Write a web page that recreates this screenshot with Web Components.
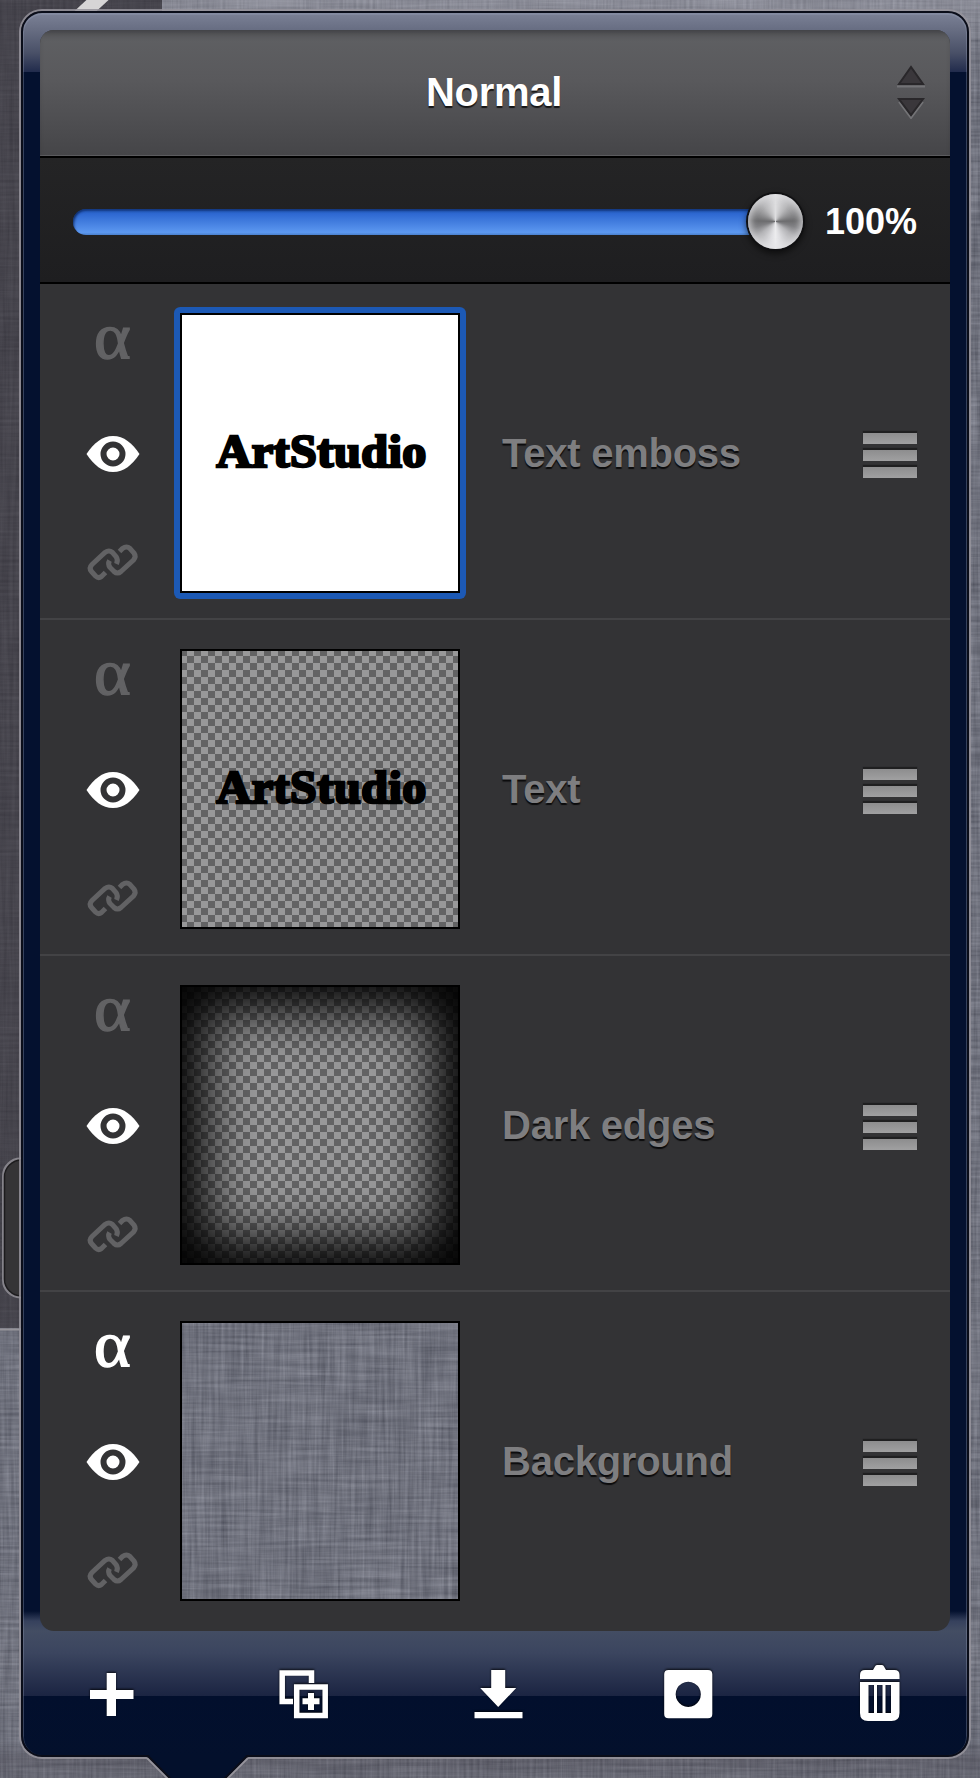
<!DOCTYPE html>
<html lang="en">
<head>
<meta charset="utf-8">
<title>Layers</title>
<style>
    html, body { margin: 0; height: 1778px; overflow: hidden; }

    body {
        position: relative;
        box-sizing: border-box;
        padding: 11px 11px 0 21px;
        background: #77757f;
        font-family: 'Liberation Sans', Arial, sans-serif;
        font-weight: bold;
    }
</style>
</head>
<body>
    <studio-canvas></studio-canvas>

    <layers-popover>
        <blend-mode slot="head">Normal</blend-mode>
        <opacity-slider slot="head">100%</opacity-slider>

        <layer-row selected>Text emboss<layer-thumb slot="thumb" kind="white">ArtStudio</layer-thumb></layer-row>
        <layer-row>Text<layer-thumb slot="thumb" kind="checker">ArtStudio</layer-thumb></layer-row>
        <layer-row>Dark edges<layer-thumb slot="thumb" kind="edges"></layer-thumb></layer-row>
        <layer-row alpha>Background<layer-thumb slot="thumb" kind="linen"></layer-thumb></layer-row>

        <layer-toolbar slot="foot"></layer-toolbar>
    </layers-popover>

<script>
const define = (name, html) => {
    const template = document.createElement('template')
    template.innerHTML = html

    window.customElements.define(name, class extends HTMLElement {
        constructor() {
            super()
            this.attachShadow({ mode: 'open' }).appendChild(template.content.cloneNode(true))
        }
    })
}

/* brushed cloth: two stretched noises, one along each axis */
define('linen-texture', `
    <style>
        :host { display: block; overflow: hidden; }
        svg { display: block; width: 100%; height: 100%; }
    </style>
    <svg>
        <filter id="h" x="0" y="0" width="100%" height="100%" color-interpolation-filters="sRGB">
            <feTurbulence type="fractalNoise" baseFrequency="0.013 0.3" numOctaves="3" seed="4"/>
            <feColorMatrix values="1 0 0 0 -.07  1 0 0 0 -.06  1 0 0 0 -.01  0 0 0 0 1"/>
        </filter>
        <filter id="v" x="0" y="0" width="100%" height="100%" color-interpolation-filters="sRGB">
            <feTurbulence type="fractalNoise" baseFrequency="0.3 0.013" numOctaves="3" seed="9"/>
            <feColorMatrix values="1 0 0 0 -.07  1 0 0 0 -.06  1 0 0 0 -.01  0 0 0 0 1"/>
        </filter>
        <rect width="100%" height="100%" fill="#72747f"/>
        <rect width="100%" height="100%" filter="url(#h)" opacity=".2"/>
        <rect width="100%" height="100%" filter="url(#v)" opacity=".17"/>
    </svg>
`)

define('studio-canvas', `
    <style>
        :host { position: absolute; inset: 0; overflow: hidden; }
        linen-texture, .shade, svg { position: absolute; inset: 0; }
        .shade {
            background:
                linear-gradient(rgba(42,38,44,.6), rgba(42,38,44,.6)) 0 0 / 162px 72px no-repeat,
                linear-gradient(rgba(42,38,44,.6), rgba(42,38,44,.6)) 0 72px / 40px 1256px no-repeat,
                linear-gradient(rgba(205,205,215,.3), rgba(205,205,215,.1)) 162px 0 / 818px 40px no-repeat,
                linear-gradient(transparent 1740px, rgba(60,56,66,.3) 1760px, rgba(60,56,66,.15));
        }
    </style>
    <linen-texture></linen-texture>
    <div class="shade"></div>
    <svg width="980" height="1778" fill="none">
        <path d="M0 1329.500H40" stroke="#96949a" stroke-width="2"/>
        <rect x="3.500" y="1159" width="60" height="138" rx="17" fill="#353436" stroke="#85838a" stroke-width="3"/>
        <rect x="4.500" y="1160" width="60" height="136" rx="17" stroke="#1c1b1d" stroke-width="1.500"/>
        <path d="M104-6 78 18" stroke="#d6d5d6" stroke-width="15"/>
    </svg>
`)

define('layers-popover', `
    <style>
        :host {
            display: block;
            position: relative;
            box-sizing: border-box;
            height: 1746px;
            padding: 17px 17px 0;
            border: 2px solid #0a0d19;
            border-radius: 21px;
            box-shadow: 0 0 0 2px rgba(150,148,156,.85), inset 0 1px 0 1px rgba(150,158,180,.35);
            background: linear-gradient(
                #7b8196 0, #676d82 17px, #495067 40px, #212b4c 59px,
                #04112f 59px, #04112f 1598px,
                #36415d 1608px, #434d63 1618px, #3b455f 1640px, #1b2442 1683px,
                #020f2d 1683px, #03102c);
        }
        .panel {
            display: flex;
            flex-direction: column;
            height: 1601px;
            border-radius: 14px;
            overflow: hidden;
            background: #333335;
        }
        .arrow { position: absolute; left: 121px; bottom: -23px; }
    </style>
    <div class="panel">
        <slot name="head"></slot>
        <slot></slot>
    </div>
    <slot name="foot"></slot>
    <svg class="arrow" width="110" height="25">
        <path d="M5 0H102V5L82 25H25L5 5Z" fill="#03102c"/>
        <path d="M3.500 3 26.500 26M103.500 3 80.500 26" stroke="#0a0d19" stroke-width="2.500"/>
        <path d="M3 5 24 26M104 5 83 26" stroke="#96949c" stroke-width="1.800"/>
    </svg>
`)

define('blend-mode', `
    <style>
        :host {
            display: grid;
            grid-template-columns: 60px 1fr 60px;
            align-items: center;
            box-sizing: border-box;
            height: 128px;
            padding: 0 10px;
            border-bottom: 2px solid #000;
            background: linear-gradient(#5f6063, #59595c 40%, #454548);
            box-shadow: inset 0 7px 7px -4px rgba(20,20,24,.45), inset 0 -1px 0 #5b5b5e;
            color: #fff;
            font-size: 40px;
            letter-spacing: -.3px;
            line-height: 46px;
            text-align: center;
            text-shadow: 0 2px 1px rgba(0,0,0,.75);
        }
        span { grid-column: 2; padding-right: 2px; padding-bottom: 2px; }
        svg { justify-self: end; margin-right: 14px; margin-bottom: 3px; }
    </style>
    <span><slot></slot></span>
    <svg width="30" height="54" stroke-width="2">
        <path d="M1 21.500H29M3 37 15 53 27 37" stroke="#737376" fill="none"/>
        <path d="M3 19 15 2 27 19Z" fill="#3a373b" stroke="#29272a"/>
        <path d="M3 34H27L15 50Z" fill="#3a373b" stroke="#29272a"/>
    </svg>
`)

define('opacity-slider', `
    <style>
        :host {
            display: flex;
            align-items: center;
            box-sizing: border-box;
            height: 126px;
            padding: 3px 0 0 33px;
            border-bottom: 2px solid #000;
            background: linear-gradient(#242425, #1e1e20);
            color: #fff;
            font-size: 36px;
        }
        .track {
            display: flex;
            justify-content: flex-end;
            align-items: center;
            width: 730px;
            height: 26px;
            border-radius: 13px;
            background: linear-gradient(#2258b8, #2f69d2 20%, #5c98f0 90%, #4a80cd) 0 0 / 715px 100% no-repeat;
            box-shadow: inset 8px 3px 3px -7px rgba(10,35,90,.7), inset 0 2px 2px rgba(10,35,90,.6);
        }
        .knob {
            width: 55px;
            height: 55px;
            border-radius: 50%;
            background: conic-gradient(#dedee0, #b9b9bb 35deg, #8e8e90 65deg, #6c6c6e 88deg, #7f7f82 105deg, #b4b4b7 130deg,
                #dedee1 165deg, #ececee 180deg, #dedee1 195deg, #b4b4b7 230deg, #7f7f82 255deg, #6c6c6e 272deg, #8e8e90 295deg, #b9b9bb 325deg, #dedee0);
            box-shadow: 0 0 0 2px #101012, 0 3px 6px 2px rgba(0,0,0,.55), inset 0 0 6px 3px rgba(225,225,228,.7);
        }
        .value { margin-left: 22px; line-height: 40px; padding-top: 1px; }
    </style>
    <div class="track"><div class="knob"></div></div>
    <div class="value"><slot></slot></div>
`)

define('layer-thumb', `
    <style>
        :host {
            display: grid;
            place-items: center;
            box-sizing: border-box;
            width: 280px;
            height: 280px;
            border: 2px solid #000;
            background: #fff;
            color: #000;
            font: bold 46px/54px 'Liberation Serif', serif;
            letter-spacing: .5px;
            -webkit-text-stroke: 2.600px #000;
        }
        :host([kind="checker"]), :host([kind="edges"]) {
            background: conic-gradient(#636364 25%, #989899 0 50%, #636364 0 75%, #989899 0) 5px -2px / 14px 14px;
        }
        :host([kind="edges"]) { box-shadow: inset 0 0 52px 24px #000; }
        .name { transform: translate(2px, -1px) scaleX(1.045); }
        linen-texture { display: none; width: 276px; height: 276px; }
        :host([kind="linen"]) linen-texture { display: block; }
        :host([kind="linen"]) .name { display: none; }
    </style>
    <linen-texture></linen-texture>
    <span class="name"><slot></slot></span>
`)

define('layer-row', `
    <style>
        :host {
            display: grid;
            grid-template-columns: 107px 280px 1fr 54px;
            box-sizing: border-box;
            flex: none;
            height: 336px;
            padding: 29px 33px 0;
            border-bottom: 2px solid #434345;
            color: #7e7e80;
            font-size: 40px;
            letter-spacing: -.25px;
        }
        :host(:last-of-type) { border-bottom-color: transparent; }
        .flags {
            display: flex;
            flex-direction: column;
            align-items: center;
            width: 79px;
            height: 280px;
            color: #626264;
        }
        .alpha {
            height: 60px;
            font: 66px/46px 'Liberation Serif', serif;
            -webkit-text-stroke: 1.500px currentColor;
            transform: scaleX(1.06);
        }
        :host([alpha]) .alpha { color: #fff; }
        .eye { margin-top: 56px; color: #fff; }
        .link { margin-top: 59px; }
        :host([selected]) .thumb { border-radius: 2px; box-shadow: 0 0 0 6px #1c59b5; }
        .thumb { width: 280px; height: 280px; }
        .name {
            padding: 117px 0 0 42px;
            line-height: 46px;
            white-space: nowrap;
            text-shadow: 0 2px 1px #0b0b0c;
        }
        .grip { display: flex; flex-direction: column; gap: 6px; padding-top: 120px; }
        .grip i { height: 11px; background: linear-gradient(#8d8d8e, #a0a0a1); box-shadow: 0 -2px 1px #1f1f20; }
    </style>
    <div class="flags">
        <div class="alpha">α</div>
        <svg class="eye" width="54" height="50" viewBox="0 0 54 50">
            <path d="M.5 25C8 14 16 7 27 7S46 14 53.500 25C46 36 38 43 27 43S8 36 .5 25Z" fill="currentColor"/>
            <circle cx="27" cy="25" r="9.500" fill="none" stroke="#333335" stroke-width="6"/>
        </svg>
        <svg class="link" width="60" height="50" viewBox="0 0 60 50" fill="none" stroke="currentColor" stroke-width="5">
            <path d="M22.500 34.500 18.500 38.500Q15.500 41 12.500 38L8.500 33.500Q5.500 30 9 26.500L22 14.500Q26 11.500 29.500 14.500L33 18.500Q35.500 22 33.500 26"/>
            <path d="M36.500 13.500 39.500 10.500Q43.500 7.500 47 10.500L51 15Q53.500 18.500 50.500 22L38 33.500Q34.500 36.500 31 33.500L27 29.500Q24.500 26 26.500 22.500"/>
        </svg>
    </div>
    <div class="thumb"><slot name="thumb"></slot></div>
    <div class="name"><slot></slot></div>
    <div class="grip"><i></i><i></i><i></i></div>
`)

define('layer-toolbar', `
    <style>
        :host {
            display: flex;
            justify-content: space-between;
            padding: 33px 40px 0 41px;
            color: #fff;
        }
        svg { filter: drop-shadow(0 -1px 1px rgba(0,0,0,.8)); }
    </style>
    <svg width="60" height="60" fill="#fff"><path d="M25.700 9h9.300v17h17.500v9H35v17h-9.300V35H9v-9h16.700z"/></svg>
    <svg width="60" height="60" fill="none" stroke="#fff">
        <path d="M38.500 19V9H9.200V37.500H20" stroke-width="5.500"/>
        <rect x="23.700" y="23" width="28.500" height="28.500" stroke-width="5.500"/>
        <path d="M38 29V46M29.500 37.300H46.500" stroke-width="6"/>
    </svg>
    <svg width="60" height="60" fill="#fff"><path d="M25.200 6h14v18h11L32.200 43 14.200 24h11zM8.500 48h48v6.300h-48z"/></svg>
    <svg width="60" height="60" fill="#fff"><path fill-rule="evenodd" d="M10.500 6h39.500q4.300 0 4.300 4.300v39.700q0 4.300-4.300 4.300H10.500q-4.300 0-4.300-4.300V10.300Q6.200 6 10.500 6zM30.200 17.700a12.600 12.600 0 1 0 .1 0z"/></svg>
    <svg width="60" height="60" fill="#fff">
        <path d="M10 15V11q0-5 5-5h8l2-3.500q.5-1.500 2-1.500h5q1.500 0 2 1.500l2 3.500h8.500q5 0 5 5v4z"/>
        <path fill-rule="evenodd" d="M10 18h39.500v31q0 8-8 8H18q-8 0-8-8zM18.500 21v28H24V21zM27 21v28h5.500V21zM35.500 21v28H41V21z"/>
    </svg>
`)
</script>
</body>
</html>
